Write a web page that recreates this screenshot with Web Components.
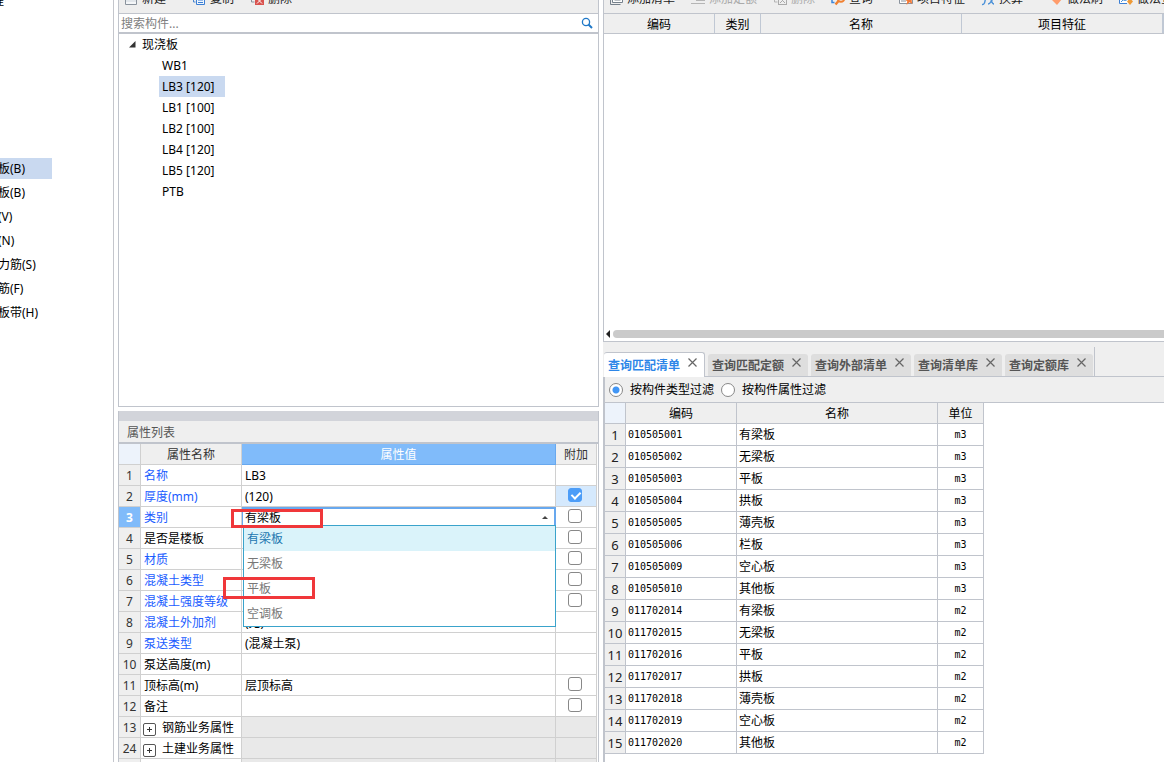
<!DOCTYPE html>
<html lang="zh-CN">
<head>
<meta charset="utf-8">
<title>构件属性与清单匹配</title>
<style>
html, body { margin: 0; height: 100%; }
body { font: 12px/20px "Noto Sans", "Noto Sans CJK SC", sans-serif; color: #000; background: #fff; overflow: hidden; }
</style>
</head>
<body>
<app-shell>
  <component-nav slot="nav"></component-nav>
  <component-tree slot="tree"></component-tree>
  <property-grid slot="props"></property-grid>
  <bill-panel slot="bill"></bill-panel>
  <query-panel slot="query"></query-panel>
</app-shell>

<script>
const define = (name, html, setup) => customElements.define(name, class extends HTMLElement {
  connectedCallback() {
    if (this.shadowRoot) return;
    const root = this.attachShadow({ mode: 'open' });
    root.innerHTML = `<style>*{box-sizing:border-box}</style>` + (typeof html === 'function' ? html(this) : html);
    if (setup) setup(this, root);
  }
});

const ICONS = {
  create: '<path d="M1.5 1.5h11v11h-11z" fill="#f4f6f8" stroke="#8a939d"/><path d="M2 9h10" stroke="#cfd6dd"/>',
  copy: '<path d="M1.500 1.500h7M1.500 1v9h2" fill="none" stroke="#4a86d0"/><path d="M4.500 3.500h8v9h-8z" fill="#eef5fd" stroke="#3c7fd4"/><path d="M6 8h5M6 10.500h5" stroke="#3c7fd4"/>',
  remove: '<path d="M1.500 2v8h3M6.500 6v6.500" fill="none" stroke="#8a939d"/><rect x="5" y="5" width="9" height="8" fill="#d9534f"/><path d="M7 6.500l5 5M12 6.500l-5 5" stroke="#fff"/>',
  removeOff: '<path d="M1.500 2v8h3" fill="none" stroke="#b5b5b5"/><rect x="5.500" y="4.500" width="8" height="8" fill="#eee" stroke="#aaa"/><path d="M7 6l5 5M12 6l-5 5" stroke="#aaa"/>',
  add: '<path d="M3.500 1.500h10v9h-10z" fill="#fff" stroke="#76818c"/><path d="M1.500 4v8.500h10M5.500 5.500h6M5.500 8h6" fill="none" stroke="#76818c"/>',
  addOff: '<path d="M5 2.500h9M5 5.500h9M5 8.500h9M0 11.500h14" stroke="#b5b5b5"/>',
  query: '<path d="M1 6v4.500h2.500" fill="none" stroke="#3c86da" stroke-width="1.500"/><circle cx="10" cy="6.500" r="3.300" fill="none" stroke="#f08030" stroke-width="2"/><path d="M7.500 9L4.500 12.500" stroke="#f08030" stroke-width="2.500"/>',
  feature: '<path d="M.5 1.500h13v10H.5z" fill="#fff" stroke="#8a939d"/><path d="M2 6.500h5M2 9h5" stroke="#8a939d"/><path d="M10.500 3l1.300 3 3 .3-2.200 2.100.7 3.600-2.800-1.700L7.500 13l.8-3.600L6 7.300l3.200-.3z" fill="#f47b38"/>',
  fx: '<path d="M8 1.500c-3-1-3 2-3.500 5S3.500 13 1 12.500M2.500 6h5M8 6c3 0 2 6 5 6M13.500 6C11 6 10 12 7 12" fill="none" stroke="#4b91d8" stroke-width="1.400"/>',
  brush: '<path d="M2 7l4-6 7 6-5 6z" fill="#ff9c6b"/>',
  method: '<path d="M13.500 6V1.500H.5v10H8" fill="#fff" stroke="#3c7fd4"/><circle cx="6" cy="6" r="2.500" fill="none" stroke="#4b91d8"/><path d="M2 10l3-3" stroke="#4b91d8"/><path d="M11 6l3 3.500-3 3.500-3-3.500z" fill="#ef9a36"/>'
};

/* Three-column workbench: navigation, tree over properties, bill over query */
define('app-shell', `
<style>
:host { display: grid; grid-template-columns: 114px minmax(0, 481fr) minmax(0, 561fr); column-gap: 4px; height: 100vh; }
.col { display: grid; min-height: 0; min-width: 0; }
.nav { border-right: 1px solid #c4c6cc; overflow: hidden; }
.mid { grid-template-rows: minmax(0, 407fr) minmax(0, 351fr); row-gap: 4px; }
.right { grid-template-rows: minmax(0, 342fr) minmax(0, 420fr); }
</style>
<div class="col nav"><slot name="nav"></slot></div>
<div class="col mid"><slot name="tree"></slot><slot name="props"></slot></div>
<div class="col right"><slot name="bill"></slot><slot name="query"></slot></div>`);

/* Toolbar button: icon, caption and an optional drop-down arrow */
define('tool-button', el => `
<style>
:host { display: block; flex: none; }
button { display: flex; align-items: center; gap: 4px; height: 26px; padding: 0; border: 0; background: none; font: inherit; color: #222; white-space: nowrap; }
button:disabled { color: #aaa; }
svg { width: 14px; height: 14px; }
i { margin: 0 -4px 0 4px; border: 3px solid transparent; border-top: 2px solid #555; border-bottom: 0; }
</style>
<button type="button" ${el.hasAttribute('disabled') ? 'disabled' : ''}>
<svg viewBox="0 0 14 14" aria-hidden="true">${ICONS[el.getAttribute('icon')]}</svg>
<span><slot></slot></span>${el.hasAttribute('menu') ? '<i></i>' : ''}</button>`);

define('tool-strip', `
<style>
:host { display: flex; align-items: flex-end; height: 14px; overflow: hidden; background: #eee; border-bottom: 1px solid #c0c4cc; flex: none; }
div { display: flex; gap: 16px; padding-left: 5px; margin-bottom: 1px; }
</style>
<div><slot></slot></div>`);

define('component-nav', `
<style>
:host { display: block; overflow: hidden; }
nav { display: flex; flex-direction: column; gap: 3px; }
.top { height: 158px; line-height: 20px; overflow: hidden; }
.top span { display: block; margin: -9px 0 0 -8px; }
a { display: block; width: 52px; height: 21px; line-height: 22px; white-space: nowrap; color: #000; text-decoration: none; }
a span { margin-left: -2px; }
a[aria-current] { background: #c9d9f0; }
</style>
<div class="top"><span>程</span></div>
<nav>
<a href="#b1" aria-current="page"><span>板(B)</span></a>
<a href="#b2"><span>板(B)</span></a>
<a href="#v"><span>(V)</span></a>
<a href="#n"><span>(N)</span></a>
<a href="#s"><span>力筋(S)</span></a>
<a href="#f"><span>筋(F)</span></a>
<a href="#h"><span>板带(H)</span></a>
</nav>`);

define('component-tree', `
<style>
:host { display: flex; flex-direction: column; min-height: 0; border: solid #c0c4cc; border-width: 0 1px 1px; overflow: hidden; }
label { display: flex; align-items: center; height: 20px; padding: 0 5px 0 2px; border-bottom: 2px solid #c0c4cc; flex: none; }
input { flex: 1; min-width: 0; height: 18px; padding: 2px 0 0; border: 0; outline: 0; background: none; font: inherit; }
input::placeholder { color: #808080; opacity: 1; }
svg { width: 12px; height: 12px; }
ul { list-style: none; margin: 0; padding: 0; line-height: 21px; }
.root > span { display: flex; align-items: center; gap: 6px; padding-left: 10px; }
.root svg { width: 7px; height: 7px; }
ul ul { padding-left: 40px; }
ul ul span { display: inline-block; vertical-align: top; height: 21px; padding: 0 10px 0 3px; }
.on { background: #c9d9f0; }
</style>
<tool-strip>
<tool-button icon="create" menu>新建</tool-button>
<tool-button icon="copy">复制</tool-button>
<tool-button icon="remove">删除</tool-button>
</tool-strip>
<label><input type="search" placeholder="搜索构件..." aria-label="搜索构件">
<svg viewBox="0 0 12 12"><circle cx="5" cy="5" r="3.600" fill="none" stroke="#1f78c8" stroke-width="1.300"/><path d="M7.500 7.500L11 11" stroke="#1f78c8" stroke-width="2"/></svg></label>
<ul><li class="root"><span><svg viewBox="0 0 7 7"><path d="M6.500 0v6.500H0z" fill="#333"/></svg>现浇板</span>
<ul></ul></li></ul>`, (el, root) => {
  root.querySelector('ul ul').innerHTML = ['WB1', 'LB3 [120]', 'LB1 [100]', 'LB2 [100]', 'LB4 [120]', 'LB5 [120]', 'PTB']
    .map((t, i) => `<li><span class="${i === 1 ? 'on' : ''}">${t}</span></li>`).join('');
});

/* Open drop-down with its option list and the two callout frames */
define('category-editor', `
<style>
:host { display: block; position: relative; height: 20px; margin-right: -1px; }
select { appearance: none; display: block; width: 100%; height: 20px; padding: 0 2px; border: 2px solid #68a8ee; border-width: 2px 2px 1px 1px; border-radius: 0; background: #fff; font: inherit; color: #000; line-height: 17px; outline: 0; }
.arrow { position: absolute; right: 8px; top: 9px; border: 3px solid transparent; border-top: 0; border-bottom-color: #444; }
ul { position: absolute; z-index: 2; left: 1px; right: 0; top: 18px; margin: 0; padding: 0; list-style: none; background: #fff; border: 1px solid #3aa3cb; color: #777; }
li { height: 25px; line-height: 26px; padding-left: 3px; }
.on { background: #daf3fa; color: #2176b0; }
.mark { position: absolute; z-index: 3; width: 92px; border: 3px solid #f0373a; pointer-events: none; }
.first { left: -11px; top: 2px; height: 19px; }
.second { left: -19px; top: 70px; height: 22px; }
</style>
<select aria-label="类别"><option>有梁板</option><option>无梁板</option><option>平板</option><option>空调板</option></select>
<span class="arrow"></span>
<ul role="listbox" aria-label="类别选项"><li role="option" class="on" aria-selected="true">有梁板</li><li role="option">无梁板</li><li role="option">平板</li><li role="option">空调板</li></ul>
<span class="mark first"></span><span class="mark second"></span>`);

define('property-grid', `
<style>
:host { display: block; min-height: 0; border: solid #c0c4cc; border-width: 0 1px; overflow: hidden; }
.band { height: 10px; background: #d2d4da; }
h2 { margin: 0; height: 23px; padding-left: 8px; background: #efefef; border-bottom: 2px solid #c0c4cc; font: inherit; line-height: 24px; color: #555; }
table { width: 100%; border-collapse: separate; border-spacing: 0; table-layout: fixed; padding-right: 1px; }
th, td { height: 21px; padding: 2px 0 0 3px; border: solid #d0d0d0; border-width: 0 1px 1px 0; font-weight: 400; text-align: left; line-height: 18px; white-space: nowrap; }
thead th { text-align: center; background: #efefef; color: #333; padding: 2px 0 0; }
thead th:first-child { background: #edf3fb; }
thead .val { background: #80bbfa; border-color: #68a8ee; color: #fff; }
tbody th { background: #efefef; color: #333; text-align: center; padding: 2px 0 0; }
tbody .cur th { background: #80bbfa; color: #fff; font-weight: 700; }
.blue { color: #1a5cff; }
.gray { background: #e9e9e9; }
.cur .v { padding: 0; border-right-color: #68a8ee; }
.c { padding: 0; text-align: center; }
.ticked { background: #d5e9fd; }
input { appearance: none; display: block; width: 14px; height: 14px; margin: 0 auto 2px 12px; border: 1px solid #888; border-radius: 3px; background: #fff; }
input:checked { border-color: #4c9df8; background: #4c9df8; position: relative; }
input:checked::after { content: ""; position: absolute; left: 4px; top: 1px; width: 4px; height: 7px; border: solid #fff; border-width: 0 2px 2px 0; transform: rotate(45deg); }
button { width: 13px; height: 13px; padding: 0; margin: 0 6px 0 -1px; border: 1px solid #555; border-radius: 2px; background: #fff; display: inline-grid; place-items: center; vertical-align: 0; }
svg { width: 5px; height: 5px; display: block; }
</style>
<div class="band"></div><h2>属性列表</h2>
<table><colgroup><col style="width:22px"><col style="width:101px"><col><col style="width:41px"></colgroup>
<thead><tr><th></th><th>属性名称</th><th class="val">属性值</th><th>附加</th></tr></thead><tbody></tbody></table>`, (el, root) => {
  const rows = [
    [1, '名称', 'LB3', 1, 0], [2, '厚度(mm)', '(120)', 1, 2], [3, '类别', null, 1, 1], [4, '是否是楼板', '', 0, 1],
    [5, '材质', '', 1, 1], [6, '混凝土类型', '', 1, 1], [7, '混凝土强度等级', '', 1, 1], [8, '混凝土外加剂', '(无)', 1, 0],
    [9, '泵送类型', '(混凝土泵)', 1, 0], [10, '泵送高度(m)', '', 0, 0], [11, '顶标高(m)', '层顶标高', 0, 1], [12, '备注', '', 0, 1],
    [13, '钢筋业务属性', 'group', 0, 0], [24, '土建业务属性', 'group', 0, 0], ['', '', 'group', 0, 0]
  ];
  root.querySelector('tbody').innerHTML = rows.map(([n, name, v, blue, check]) => {
    const group = v === 'group';
    const toggle = group && name ? `<button type="button" aria-label="展开${name}"><svg viewBox="0 0 5 5"><path d="M0 2.500h5M2.500 0v5" stroke="#333"/></svg></button>` : '';
    return `<tr class="${n === 3 ? 'cur' : ''}"><th scope="row">${n}</th><td class="${blue ? 'blue' : ''}">${toggle}${name}</td>` +
      `<td class="v ${group ? 'gray' : ''}">${v === null ? '<category-editor></category-editor>' : group ? '' : v}</td>` +
      `<td class="c">${check ? `<input type="checkbox" aria-label="附加${name}" ${check === 2 ? 'checked' : ''}>` : ''}</td></tr>`.replace('class="c"', check === 2 ? 'class="c ticked"' : group ? 'class="c gray"' : 'class="c"');
  }).join('');
});

define('bill-panel', `
<style>
:host { display: flex; flex-direction: column; min-height: 0; border: solid #c0c4cc; border-width: 0 0 1px 1px; overflow: hidden; }
.head { flex: none; background: #efefef; border-bottom: 1px solid #c0c4cc; }
table { width: 100%; table-layout: fixed; border-spacing: 0; }
th { height: 19px; padding: 2px 0 0; font-weight: 400; border-right: 1px solid #c0c8d4; line-height: 17px; }
.body { flex: 1; }
.scroll { display: flex; align-items: center; gap: 3px; height: 14px; padding-left: 2px; }
.scroll button { padding: 0; width: 0; height: 8px; border: solid transparent; border-width: 4px 4px 4px 0; border-right-color: #222; background: none; }
.scroll div { flex: 1; height: 8px; border-radius: 4px 0 0 4px; background: #cacaca; }
</style>
<tool-strip>
<tool-button icon="add">添加清单</tool-button>
<tool-button icon="addOff" disabled>添加定额</tool-button>
<tool-button icon="removeOff" disabled>删除</tool-button>
<tool-button icon="query" menu>查询</tool-button>
<tool-button icon="feature">项目特征</tool-button>
<tool-button icon="fx" menu>换算</tool-button>
<tool-button icon="brush">做法刷</tool-button>
<tool-button icon="method">做法查询</tool-button>
</tool-strip>
<div class="head"><table><colgroup><col style="width:111px"><col style="width:46px"><col><col><col style="width:1px"></colgroup>
<thead><tr><th>编码</th><th>类别</th><th>名称</th><th>项目特征</th><th></th></tr></thead></table></div>
<div class="body"></div>
<div class="scroll"><button type="button" aria-label="向左滚动"></button><div></div></div>`);

define('query-tab', el => `
<style>
:host { display: flex; align-items: center; height: 22px; padding: 0 7px 0 4px; gap: 8px; border-radius: 3px 3px 0 0; background: #dedede; color: #555; font-weight: 700; white-space: nowrap; }
:host([selected]) { height: 25px; background: #fff; color: #2d86e8; border: 1px solid #c0c4cc; border-width: 1px 1px 0 0; margin-bottom: -1px; }
button { border: 0; padding: 2px 0 0; background: none; font: inherit; color: inherit; }
.x { padding: 0; margin-bottom: 5px; }
svg { width: 9px; height: 9px; display: block; }
</style>
<button type="button" role="tab" aria-selected="${el.hasAttribute('selected')}"><slot></slot></button>
<button type="button" class="x" aria-label="关闭"><svg viewBox="0 0 9 9"><path d="M.5.5l8 8M8.500.5l-8 8" stroke="#666" stroke-width="1.200"/></svg></button>`);

define('query-panel', `
<style>
:host { display: block; min-height: 0; overflow: hidden; background: #efefef; }
.tabs { display: flex; align-items: flex-end; gap: 3px; height: 35px; border-bottom: 1px solid #c0c4cc; margin-left: 1px; }
.end { height: 29px; width: 0; border-left: 1px solid #c0c4cc; margin-left: -2px; }
.main { height: 100%; border-left: 2px solid #c0c4cc; background: #fff; }
.filter { display: flex; align-items: center; gap: 7px; height: 26px; padding-left: 4px; background: #efefef; border-bottom: 1px solid #c0c4cc; }
label { display: flex; align-items: center; gap: 7px; }
input { appearance: none; width: 14px; height: 14px; margin: 0; border: 1px solid #888; border-radius: 50%; background: #fff; }
input:checked { background: radial-gradient(circle, #4196f5 3px, #fff 4px); }
table { width: 379px; table-layout: fixed; border-spacing: 0; }
th, td { height: 22px; padding: 0; border: solid #c0c4cc; border-width: 0 1px 1px 0; font-weight: 400; line-height: 20px; }
thead th { height: 21px; padding-top: 2px; line-height: 18px; background: #efefef; }
thead th:first-child { background: #edf3fb; }
tbody th { background: #efefef; color: #222; font-size: 13px; }
td:nth-child(2) { font: 10px/20px "DejaVu Sans Mono", monospace; padding-left: 2px; }
td:nth-child(3) { padding-left: 2px; }
td:nth-child(4) { font: 10px/20px "DejaVu Sans Mono", monospace; text-align: center; padding-left: 0; }
</style>
<div class="tabs" role="tablist">
<query-tab selected>查询匹配清单</query-tab><query-tab>查询匹配定额</query-tab><query-tab>查询外部清单</query-tab><query-tab>查询清单库</query-tab><query-tab>查询定额库</query-tab><span class="end"></span>
</div>
<div class="main">
<div class="filter"><label><input type="radio" name="filter" checked>按构件类型过滤</label><label><input type="radio" name="filter">按构件属性过滤</label></div>
<table><colgroup><col style="width:21px"><col style="width:111px"><col style="width:201px"><col style="width:46px"></colgroup>
<thead><tr><th></th><th>编码</th><th>名称</th><th>单位</th></tr></thead><tbody></tbody></table></div>`, (el, root) => {
  const rows = [
    ['010505001', '有梁板'], ['010505002', '无梁板'], ['010505003', '平板'], ['010505004', '拱板'], ['010505005', '薄壳板'],
    ['010505006', '栏板'], ['010505009', '空心板'], ['010505010', '其他板'], ['011702014', '有梁板'], ['011702015', '无梁板'],
    ['011702016', '平板'], ['011702017', '拱板'], ['011702018', '薄壳板'], ['011702019', '空心板'], ['011702020', '其他板']
  ];
  root.querySelector('tbody').innerHTML = rows.map(([code, name], i) =>
    `<tr><th scope="row">${i + 1}</th><td>${code}</td><td>${name}</td><td>${i < 8 ? 'm3' : 'm2'}</td></tr>`).join('');
});
</script>
</body>
</html>
